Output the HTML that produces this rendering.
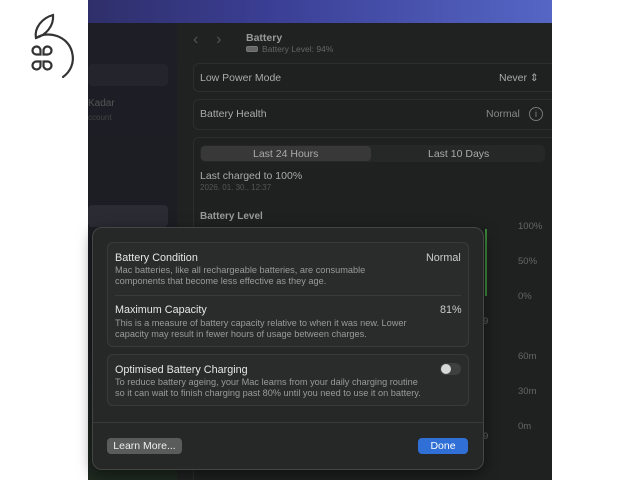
<!DOCTYPE html>
<html><head><meta charset="utf-8"><style>
*{margin:0;padding:0;box-sizing:border-box}
html,body{width:640px;height:480px;overflow:hidden}
body{background:#fff;position:relative;font-family:"Liberation Sans",sans-serif;color:#ddd}
.a{position:absolute}
.card{position:absolute;border:1px solid #2e2e2e;border-radius:6px;background:#1f2020}
.t{font-size:10.5px;color:#aaa}
.m{font-size:10.8px;color:#e6e6e6}
.s{font-size:9.2px;color:#9a9a9a;line-height:11px;white-space:nowrap}
.ax{font-size:9.5px;color:#666}
.b{display:flex;align-items:center;justify-content:center}
</style></head><body>
<svg class="a" style="left:0;top:0" width="88" height="90" viewBox="0 0 88 90" fill="none" stroke="#333" stroke-width="2.2" stroke-linecap="round">
<path d="M36 38 C34 28 42 18 53 15 C54 26 46 35 36 38 Z"/>
<path d="M36 38 C48 30 68 36 72 52 C75 63 70 72 63 77"/>
<g stroke-width="2.2">
<path d="M38.5 54.5 H37 A4 4 0 1 1 40.5 51 V54.5 Z"/>
<path d="M45.5 54.5 H47 A4 4 0 1 0 43.5 51 V54.5 Z"/>
<path d="M38.5 61.5 H37 A4 4 0 1 0 40.5 65 V61.5 Z"/>
<path d="M45.5 61.5 H47 A4 4 0 1 1 43.5 65 V61.5 Z"/>
</g>
</svg>
<div class="a" style="left:88px;top:0;width:464px;height:23px;background:linear-gradient(90deg,#2f2f6a,#3b3f95 40%,#5566c5)"></div>
<div class="a" style="left:88px;top:23px;width:89px;height:457px;background:linear-gradient(180deg,#1d1e26,#1c1d22 70%,#1f2a20)"></div>
<div class="a" style="left:88px;top:64px;width:80px;height:22px;background:#23242c;border-radius:4px"></div>
<div class="a" style="left:88px;top:98px;font-size:10px;color:#555">Kadar</div>
<div class="a" style="left:88px;top:113px;font-size:8px;color:#444">ccount</div>
<div class="a" style="left:88px;top:205px;width:80px;height:22px;background:#2a2b33;border-radius:4px"></div>
<div class="a" style="left:177px;top:23px;width:375px;height:457px;background:#202121;overflow:hidden">
<div class="a" style="left:16px;top:8px;font-size:16px;color:#555">‹&nbsp;&nbsp;&nbsp;&nbsp;›</div>
<div class="card" style="left:16px;top:40px;width:370px;height:29px"></div>
<div class="card" style="left:16px;top:76px;width:370px;height:31px"></div>
<div class="card" style="left:16px;top:114px;width:370px;height:350px"></div>
</div>
<div class="a" style="left:246px;top:32px;font-size:10.5px;font-weight:bold;color:#999">Battery</div>
<div class="a" style="left:246px;top:46px;width:12px;height:6px;border:1px solid #777;border-radius:2px;background:#666"></div>
<div class="a" style="left:262px;top:44px;font-size:8.5px;color:#666">Battery Level: 94%</div>
<div class="a t" style="left:200px;top:72px">Low Power Mode</div>
<div class="a t" style="left:499px;top:72px">Never ⇕</div>
<div class="a t" style="left:200px;top:108px">Battery Health</div>
<div class="a t" style="left:486px;top:108px;color:#888">Normal</div>
<div class="a" style="left:529px;top:107px;width:14px;height:14px;border:1px solid #777;border-radius:50%;font-size:9px;color:#888;text-align:center;line-height:12px">i</div>
<div class="a" style="left:200px;top:145px;width:345px;height:17px;background:#262727;border-radius:5px"></div>
<div class="a" style="left:201px;top:146px;width:170px;height:15px;background:#383838;border-radius:4px"></div>
<div class="a t" style="left:253px;top:148px">Last 24 Hours</div>
<div class="a t" style="left:428px;top:148px">Last 10 Days</div>
<div class="a t" style="left:200px;top:170px">Last charged to 100%</div>
<div class="a" style="left:200px;top:183px;font-size:8px;color:#555">2026. 01. 30., 12:37</div>
<div class="a" style="left:200px;top:211px;font-size:10px;font-weight:bold;color:#999">Battery Level</div>
<div class="a" style="left:485px;top:229px;width:2px;height:67px;background:#3c8a3a"></div>
<div class="a ax" style="left:518px;top:221px">100%</div>
<div class="a ax" style="left:518px;top:256px">50%</div>
<div class="a ax" style="left:518px;top:291px">0%</div>
<div class="a ax" style="left:518px;top:351px">60m</div>
<div class="a ax" style="left:518px;top:386px">30m</div>
<div class="a ax" style="left:518px;top:421px">0m</div>
<div class="a ax" style="left:483px;top:316px">9</div>
<div class="a ax" style="left:483px;top:431px">9</div>
<div class="a" style="left:92px;top:227px;width:392px;height:243px;background:#262727;border:1px solid #454545;border-radius:10px;box-shadow:0 4px 14px rgba(0,0,0,.5)"></div>
<div class="a" style="left:107px;top:242px;width:362px;height:105px;border:1px solid #3a3a3a;border-radius:6px;background:#2a2b2b"></div>
<div class="a" style="left:115px;top:295px;width:346px;height:1px;background:#3a3a3a"></div>
<div class="a m" style="left:115px;top:252px">Battery Condition</div>
<div class="a m" style="left:426px;top:252px;color:#ccc">Normal</div>
<div class="a s" style="left:115px;top:265px">Mac batteries, like all rechargeable batteries, are consumable<br>components that become less effective as they age.</div>
<div class="a m" style="left:115px;top:304px">Maximum Capacity</div>
<div class="a m" style="left:440px;top:304px;color:#ccc">81%</div>
<div class="a s" style="left:115px;top:318px">This is a measure of battery capacity relative to when it was new. Lower<br>capacity may result in fewer hours of usage between charges.</div>
<div class="a" style="left:107px;top:354px;width:362px;height:52px;border:1px solid #3a3a3a;border-radius:6px;background:#2a2b2b"></div>
<div class="a m" style="left:115px;top:364px">Optimised Battery Charging</div>
<div class="a s" style="left:115px;top:377px">To reduce battery ageing, your Mac learns from your daily charging routine<br>so it can wait to finish charging past 80% until you need to use it on battery.</div>
<div class="a" style="left:440px;top:363px;width:21px;height:12px;border-radius:6px;background:#3e3f3f"></div>
<div class="a" style="left:441px;top:364px;width:10px;height:10px;border-radius:50%;background:#d8d8d8"></div>
<div class="a" style="left:93px;top:422px;width:390px;height:1px;background:#3a3a3a"></div>
<div class="a b" style="left:107px;top:438px;width:75px;height:16px;border-radius:4px;background:#5a5b5b;font-size:10.5px;color:#eee">Learn More...</div>
<div class="a b" style="left:418px;top:438px;width:50px;height:16px;border-radius:4px;background:#2f6fd6;font-size:10.5px;color:#fff">Done</div>
</body></html>
